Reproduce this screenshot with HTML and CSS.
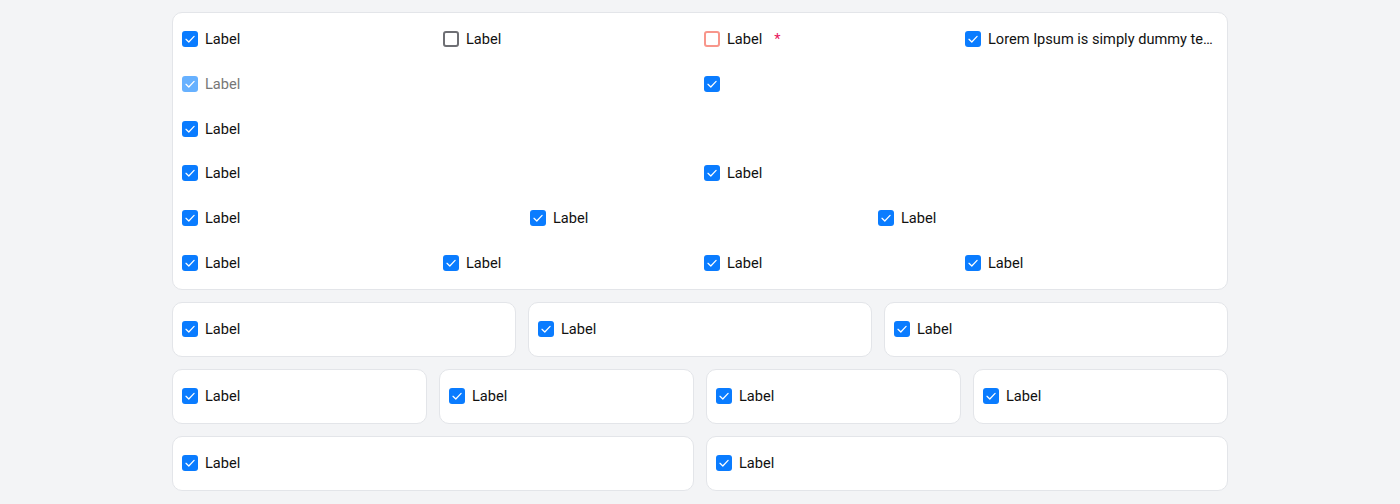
FILE: index.html
```html
<!DOCTYPE html>
<html>
<head>
<meta charset="utf-8">
<link rel="stylesheet" href="styles.css">
</head>
<body>
<svg width="0" height="0" class="defs">
  <defs>
    <symbol id="chk" viewBox="0 0 16 16"><path d="M4 8.3 L6.8 11 L12.1 5.4" fill="none" stroke="#fff" stroke-width="1.25" stroke-linecap="round" stroke-linejoin="round"/></symbol>
  </defs>
</svg>
<div class="page">
  <div class="card main">
    <div class="grid4">
      <label class="cb"><span class="box on"><svg><use href="#chk"/></svg></span><span class="txt">Label</span></label>
      <label class="cb"><span class="box off"></span><span class="txt">Label</span></label>
      <label class="cb"><span class="box err"></span><span class="txt">Label</span><span class="req">*</span></label>
      <label class="cb" title="Lorem Ipsum is simply dummy text of the printing and typesetting industry."><span class="box on"><svg><use href="#chk"/></svg></span><span class="txt">Lorem Ipsum is simply dummy text of the printing and typesetting industry.</span></label>

      <label class="cb disabled"><span class="box on"><svg><use href="#chk"/></svg></span><span class="txt">Label</span></label>
      <div></div>
      <label class="cb"><span class="box on"><svg><use href="#chk"/></svg></span></label>
      <div></div>

      <label class="cb"><span class="box on"><svg><use href="#chk"/></svg></span><span class="txt">Label</span></label>
      <div></div><div></div><div></div>

      <label class="cb"><span class="box on"><svg><use href="#chk"/></svg></span><span class="txt">Label</span></label>
      <div></div>
      <label class="cb"><span class="box on"><svg><use href="#chk"/></svg></span><span class="txt">Label</span></label>
      <div></div>

      <div class="grid3 full">
        <label class="cb"><span class="box on"><svg><use href="#chk"/></svg></span><span class="txt">Label</span></label>
        <label class="cb"><span class="box on"><svg><use href="#chk"/></svg></span><span class="txt">Label</span></label>
        <label class="cb"><span class="box on"><svg><use href="#chk"/></svg></span><span class="txt">Label</span></label>
      </div>

      <label class="cb"><span class="box on"><svg><use href="#chk"/></svg></span><span class="txt">Label</span></label>
      <label class="cb"><span class="box on"><svg><use href="#chk"/></svg></span><span class="txt">Label</span></label>
      <label class="cb"><span class="box on"><svg><use href="#chk"/></svg></span><span class="txt">Label</span></label>
      <label class="cb"><span class="box on"><svg><use href="#chk"/></svg></span><span class="txt">Label</span></label>
    </div>
  </div>

  <div class="cards cols3">
    <div class="card small"><label class="cb"><span class="box on"><svg><use href="#chk"/></svg></span><span class="txt">Label</span></label></div>
    <div class="card small"><label class="cb"><span class="box on"><svg><use href="#chk"/></svg></span><span class="txt">Label</span></label></div>
    <div class="card small"><label class="cb"><span class="box on"><svg><use href="#chk"/></svg></span><span class="txt">Label</span></label></div>
  </div>

  <div class="cards cols4">
    <div class="card small"><label class="cb"><span class="box on"><svg><use href="#chk"/></svg></span><span class="txt">Label</span></label></div>
    <div class="card small"><label class="cb"><span class="box on"><svg><use href="#chk"/></svg></span><span class="txt">Label</span></label></div>
    <div class="card small"><label class="cb"><span class="box on"><svg><use href="#chk"/></svg></span><span class="txt">Label</span></label></div>
    <div class="card small"><label class="cb"><span class="box on"><svg><use href="#chk"/></svg></span><span class="txt">Label</span></label></div>
  </div>

  <div class="cards cols2">
    <div class="card small"><label class="cb"><span class="box on"><svg><use href="#chk"/></svg></span><span class="txt">Label</span></label></div>
    <div class="card small"><label class="cb"><span class="box on"><svg><use href="#chk"/></svg></span><span class="txt">Label</span></label></div>
  </div>
</div>
</body>
</html>
```

FILE: styles.css
```css
* { box-sizing: border-box; }
html, body { margin: 0; padding: 0; }
body {
  background: #f3f4f6;
  font-family: Roboto, "Liberation Sans", sans-serif;
  font-size: 14.6px;
  color: #111;
}
.defs { position: absolute; }
.page {
  width: 1056px;
  margin: 0 auto;
  padding-top: 12px;
  display: flex;
  flex-direction: column;
  gap: 12px;
}
.card {
  background: #fff;
  border: 1px solid #e3e5e9;
  border-radius: 10px;
}
.main { padding: 8px 9px; }
.grid4 {
  display: grid;
  grid-template-columns: repeat(4, 1fr);
  grid-auto-rows: 36.67px;
  column-gap: 8px;
  row-gap: 8px;
}
.grid3 {
  display: grid;
  grid-template-columns: repeat(3, 1fr);
  column-gap: 8px;
}
.full { grid-column: 1 / -1; }
.cb {
  display: flex;
  align-items: center;
  gap: 7px;
  min-width: 0;
  height: 100%;
}
.box {
  flex: none;
  width: 16px;
  height: 16px;
  border-radius: 3px;
  display: block;
}
.box svg { width: 16px; height: 16px; display: block; }
.box.on { background: #0a7cff; }
.box.off { border: 2px solid #6e6f74; }
.box.err { border: 2px solid #f8968b; }
.disabled .box.on { background: #67b1ff; }
.disabled .txt { color: #777; }
.txt {
  white-space: nowrap;
  overflow: hidden;
  text-overflow: ellipsis;
  min-width: 0;
}
.req { color: #e8175d; margin-left: 5px; }
.cards { display: grid; gap: 12px; }
.cols3 { grid-template-columns: repeat(3, 1fr); }
.cols4 { grid-template-columns: repeat(4, 1fr); }
.cols2 { grid-template-columns: repeat(2, 1fr); }
.small {
  height: 55px;
  padding: 0 9px;
  display: flex;
  align-items: center;
}
```
